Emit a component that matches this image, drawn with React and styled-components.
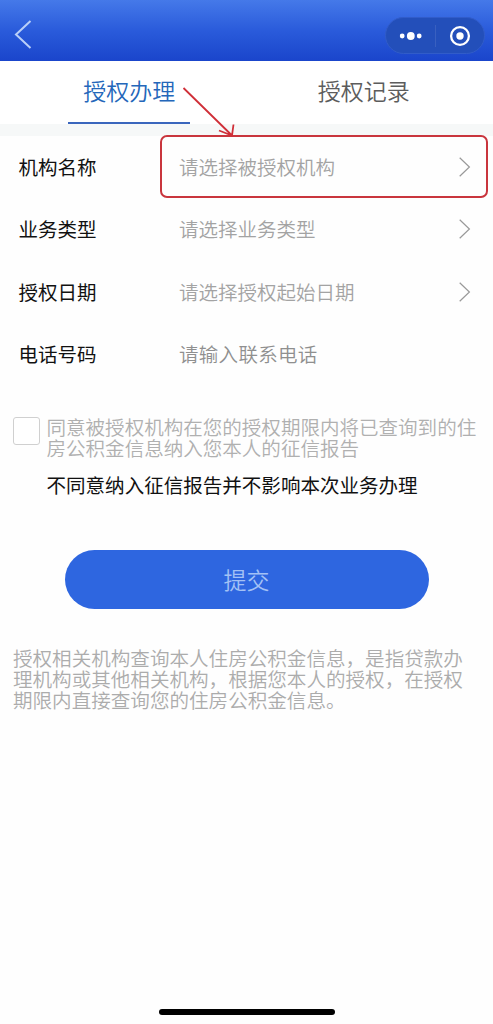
import React, { useState } from "react";
import styled, { createGlobalStyle } from "styled-components";

const GlobalStyle = createGlobalStyle`
  * {
    box-sizing: border-box;
  }
  body {
    margin: 0;
    background-color: #fefefe;
    font-family: "Noto Sans CJK SC", sans-serif;
  }
`;

const Page = styled.div`
  position: relative;
  display: flex;
  flex-direction: column;
  width: 493px;
  height: 1024px;
  overflow: hidden;
`;

const NavBar = styled.header`
  display: flex;
  align-items: flex-start;
  justify-content: space-between;
  height: 61px;
  padding: 17px 8px 0 14px;
  background: linear-gradient(#4579e9 0%, #2a5bdb 50%, #1a45cb 100%);
`;

const Capsule = styled.div`
  display: flex;
  align-items: center;
  width: 100px;
  height: 37px;
  border: 1px solid #315cc9;
  border-radius: 19px;
  background-color: #234fba;
`;

const CapsuleButton = styled.div`
  display: flex;
  flex: 1;
  align-items: center;
  justify-content: center;
`;

const CapsuleDivider = styled.div`
  width: 1px;
  height: 22px;
  background-color: #3960c0;
`;

const Tabs = styled.nav`
  display: flex;
  height: 75px;
  padding: 0 12px;
  border-bottom: 12px solid #f6f8f8;
  background-color: #fff;
`;

const Tab = styled.div`
  display: flex;
  flex: 1;
  justify-content: center;
  color: ${props => (props.$active ? "#2467ba" : "#5c5c5c")};
  cursor: pointer;
`;

const TabText = styled.div`
  width: 122px;
  height: 63px;
  border-bottom: 2px solid ${props => (props.$active ? "#3a66bd" : "transparent")};
  font-size: 23px;
  font-weight: 350;
  line-height: 58px;
  text-align: center;
`;

const Form = styled.div`
  display: flex;
  flex-direction: column;
`;

const Row = styled.div`
  display: flex;
  align-items: center;
  height: 62.3px;
  padding: 0 22px 0 18.5px;
  font-size: 19.5px;
`;

const Label = styled.div`
  width: 160.5px;
  padding-bottom: 1px;
  color: #111;
`;

const Placeholder = styled.div`
  flex: 1;
  padding-bottom: 1px;
  color: ${props => (props.$dark ? "#8f8f8f" : "#a3a3a3")};
  font-weight: 350;
  letter-spacing: ${props => (props.$dark ? "0.3px" : "0")};
`;

const Agreement = styled.div`
  display: flex;
  margin-top: 31px;
  padding-left: 13px;
`;

const CheckBox = styled.div`
  width: 27px;
  height: 28px;
  margin-top: 1px;
  border: 1px solid #d0d0d0;
  border-radius: 3px;
  background-color: ${props => (props.$checked ? "#2e66e0" : "#fff")};
  cursor: pointer;
`;

const AgreementText = styled.div`
  margin-left: 6.5px;
  color: #b0b0b0;
  font-size: 19.55px;
  font-weight: 350;
  line-height: 21px;
  white-space: nowrap;
`;

const Notice = styled.div`
  margin-top: 11px;
  padding-left: 46.5px;
  color: #111;
  font-size: 19.55px;
  line-height: 32px;
`;

const SubmitButton = styled.button`
  width: 364px;
  height: 59px;
  margin: 49px 0 0 64.5px;
  padding: 0;
  border: none;
  border-radius: 30px;
  background-color: #2e66e0;
  color: #a3c1f5;
  font-family: inherit;
  font-size: 23px;
  font-weight: 350;
  line-height: 59px;
`;

const Description = styled.div`
  margin: 38px 0 0 13px;
  color: #acacac;
  font-size: 19.57px;
  font-weight: 350;
  line-height: 21px;
  white-space: nowrap;
`;

const HomeIndicator = styled.div`
  width: 176px;
  height: 6px;
  margin: auto 0 9px 158.5px;
  border-radius: 3px;
  background-color: #000;
`;

const Highlight = styled.div`
  position: absolute;
  top: 135px;
  left: 160px;
  width: 328px;
  height: 63px;
  border: 2px solid #c9353d;
  border-radius: 7px;
`;

const Pointer = styled.svg`
  position: absolute;
  top: 84px;
  left: 180px;
`;

const fields = [
  { label: "机构名称", placeholder: "请选择被授权机构", select: true },
  { label: "业务类型", placeholder: "请选择业务类型", select: true },
  { label: "授权日期", placeholder: "请选择授权起始日期", select: true },
  { label: "电话号码", placeholder: "请输入联系电话", select: false }
];

function BackIcon() {
  return (
    <svg width="20" height="36" fill="none" stroke="#b9cff8" strokeWidth="2">
      <path d="M16.5 4L2 17.5L16.5 31" />
    </svg>
  );
}

function Chevron() {
  return (
    <svg width="12" height="20" fill="none" stroke="#999" strokeWidth="1.2">
      <path d="M.7 .7L10.4 10L.7 19.3" />
    </svg>
  );
}

function Field({ label, placeholder, select }) {
  return (
    <Row>
      <Label>{label}</Label>
      <Placeholder $dark={!select}>{placeholder}</Placeholder>
      {select && <Chevron />}
    </Row>
  );
}

function App() {
  const [tab, setTab] = useState(0);
  const [checked, setChecked] = useState(false);

  return (
    <Page>
      <GlobalStyle />
      <NavBar>
        <BackIcon />
        <Capsule>
          <CapsuleButton>
            <svg width="24" height="10" fill="#fff">
              <circle cx="4.2" cy="5" r="2.4" />
              <circle cx="12.8" cy="5" r="3.9" />
              <circle cx="21.2" cy="5" r="2.4" />
            </svg>
          </CapsuleButton>
          <CapsuleDivider />
          <CapsuleButton>
            <svg width="22" height="22" fill="none">
              <circle cx="11" cy="11" r="8.9" stroke="#fff" strokeWidth="2.3" />
              <circle cx="11" cy="11" r="3.7" fill="#fff" />
            </svg>
          </CapsuleButton>
        </Capsule>
      </NavBar>
      <Tabs>
        {["授权办理", "授权记录"].map((name, i) => (
          <Tab key={name} $active={tab === i} onClick={() => setTab(i)}>
            <TabText $active={tab === i}>{name}</TabText>
          </Tab>
        ))}
      </Tabs>
      <Form>
        {fields.map(field => (
          <Field key={field.label} {...field} />
        ))}
      </Form>
      <Agreement>
        <CheckBox $checked={checked} onClick={() => setChecked(!checked)} />
        <AgreementText>
          同意被授权机构在您的授权期限内将已查询到的住
          <br />
          房公积金信息纳入您本人的征信报告
        </AgreementText>
      </Agreement>
      <Notice>不同意纳入征信报告并不影响本次业务办理</Notice>
      <SubmitButton>提交</SubmitButton>
      <Description>
        授权相关机构查询本人住房公积金信息，是指贷款办
        <br />
        理机构或其他相关机构，根据您本人的授权，在授权
        <br />
        期限内直接查询您的住房公积金信息。
      </Description>
      <HomeIndicator />
      <Highlight />
      <Pointer width="60" height="56" fill="none" stroke="#d02f38" strokeWidth="1.8">
        <path d="M3.5 4L52 51.5M39 46.5L52 51.5L53.5 40.5" />
      </Pointer>
    </Page>
  );
}

export default App;
